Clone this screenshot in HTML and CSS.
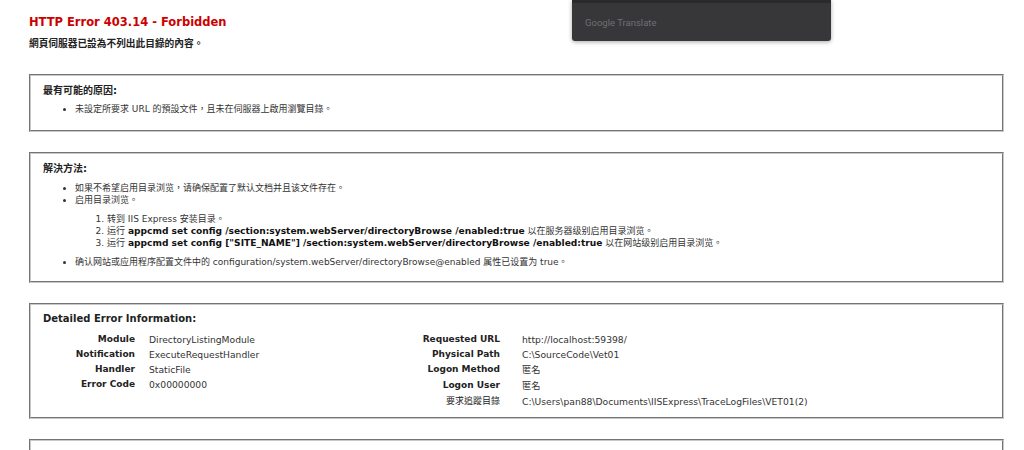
FILE: index.html
```html
<!DOCTYPE html>
<html>
<head>
  <meta charset="utf-8">
  <title>IIS 10.0 Express 詳細錯誤 - 403.14 - Forbidden</title>
  <link rel="stylesheet" href="styles.css">
</head>
<body>
  <div class="translate-popup">
    <span class="translate-brand">Google Translate</span>
  </div>

  <div class="content">
    <div class="header">
      <h3>HTTP Error 403.14 - Forbidden</h3>
      <h4>網頁伺服器已設為不列出此目錄的內容。</h4>
    </div>

    <div class="box box-causes">
      <h4>最有可能的原因:</h4>
      <ul>
        <li>未設定所要求 URL 的預設文件，且未在伺服器上啟用瀏覽目錄。</li>
      </ul>
    </div>

    <div class="box box-solutions">
      <h4>解決方法:</h4>
      <ul>
        <li>如果不希望启用目录浏览，请确保配置了默认文档并且该文件存在。</li>
        <li>启用目录浏览。
          <ol>
            <li>转到 IIS Express 安装目录。</li>
            <li>运行 <code>appcmd set config /section:system.webServer/directoryBrowse /enabled:true</code> 以在服务器级别启用目录浏览。</li>
            <li>运行 <code>appcmd set config ["SITE_NAME"] /section:system.webServer/directoryBrowse /enabled:true</code> 以在网站级别启用目录浏览。</li>
          </ol>
        </li>
        <li>确认网站或应用程序配置文件中的 configuration/system.webServer/directoryBrowse@enabled 属性已设置为 true。</li>
      </ul>
    </div>

    <div class="box box-details">
      <h4>Detailed Error Information:</h4>
      <div class="details">
        <div class="details-left">
          <span class="label">Module</span><span class="value">DirectoryListingModule</span>
          <span class="label">Notification</span><span class="value">ExecuteRequestHandler</span>
          <span class="label">Handler</span><span class="value">StaticFile</span>
          <span class="label">Error Code</span><span class="value">0x00000000</span>
        </div>
        <div class="details-right">
          <span class="label">Requested URL</span><span class="value">http://localhost:59398/</span>
          <span class="label">Physical Path</span><span class="value">C:\SourceCode\Vet01</span>
          <span class="label">Logon Method</span><span class="value">匿名</span>
          <span class="label">Logon User</span><span class="value">匿名</span>
          <span class="label label-plain">要求追蹤目錄</span><span class="value">C:\Users\pan88\Documents\IISExpress\TraceLogFiles\VET01(2)</span>
        </div>
      </div>
    </div>

    <div class="box box-more">
      <h4>更多資訊:</h4>
    </div>
  </div>
</body>
</html>
```

FILE: styles.css
```css
html {
  overflow: hidden;
}

body {
  margin: 0;
  font-family: "DejaVu Sans", "Noto Sans CJK TC", sans-serif;
  font-size: 9px;
  line-height: 12px;
  color: #333;
  background-color: #fff;
}

.content {
  padding: 0 20px 0 29px;
}

/* Page heading */
.header {
  padding-top: 15px;
}
h3 {
  margin: 0;
  font-size: 11.5px;
  line-height: 14px;
  color: #cc0000;
}
h4 {
  margin: 0;
  font-size: 10px;
  line-height: 13px;
  color: #222;
}
.header h4 {
  margin-top: 8px;
  font-size: 9.7px;
  font-weight: 600;
}

/* Fieldset-like sections */
.box {
  margin-top: 24px;
  padding: 8px 12px 14px 12px;
  border: 2px groove #c8c8c8;
}
.box + .box {
  margin-top: 20px;
}
.box-causes {
  padding-bottom: 15px;
}
.box-solutions {
  padding-bottom: 13px;
}
.box ul,
.box ol {
  margin: 7px 0 0;
  padding-left: 32px;
}
.box-causes ul {
  margin-top: 6px;
}
.box ol {
  margin: 7px 0;
}
code {
  font-family: inherit;
  font-size: 9.1px;
  font-weight: bold;
  color: #111;
}

/* Detailed error information table */
.box-details {
  padding-top: 7px;
  padding-bottom: 7px;
}
.details {
  display: flex;
  margin-top: 7px;
}
.details-left,
.details-right {
  display: grid;
  grid-auto-rows: 15px;
  line-height: 15px;
  align-content: start;
}
.details-left {
  width: 360px;
  grid-template-columns: 92px auto;
  column-gap: 14px;
}
.details-right {
  grid-template-columns: 97px auto;
  grid-template-rows: 15px 15px 16px 16px 16px;
  column-gap: 22px;
}
.label {
  text-align: right;
  font-weight: bold;
  color: #222;
  white-space: nowrap;
}
.label-plain {
  font-weight: normal;
}
.value {
  font-size: 9.2px;
  white-space: nowrap;
}

.box-more {
  padding-top: 14px;
  height: 40px;
}

/* Google Translate overlay */
.translate-popup {
  position: absolute;
  top: 0;
  left: 572px;
  width: 259px;
  height: 41px;
  box-sizing: border-box;
  padding: 14px 0 0 13px;
  background-color: #37373a;
  border-top: 3px solid #2a2a2c;
  border-radius: 0 0 3px 3px;
  box-shadow: 0 1px 4px rgba(0, 0, 0, 0.35);
  z-index: 10;
}
.translate-brand {
  font-family: Roboto, "Open Sans", sans-serif;
  font-size: 9.5px;
  line-height: 12px;
  color: #6f6f72;
}
```
